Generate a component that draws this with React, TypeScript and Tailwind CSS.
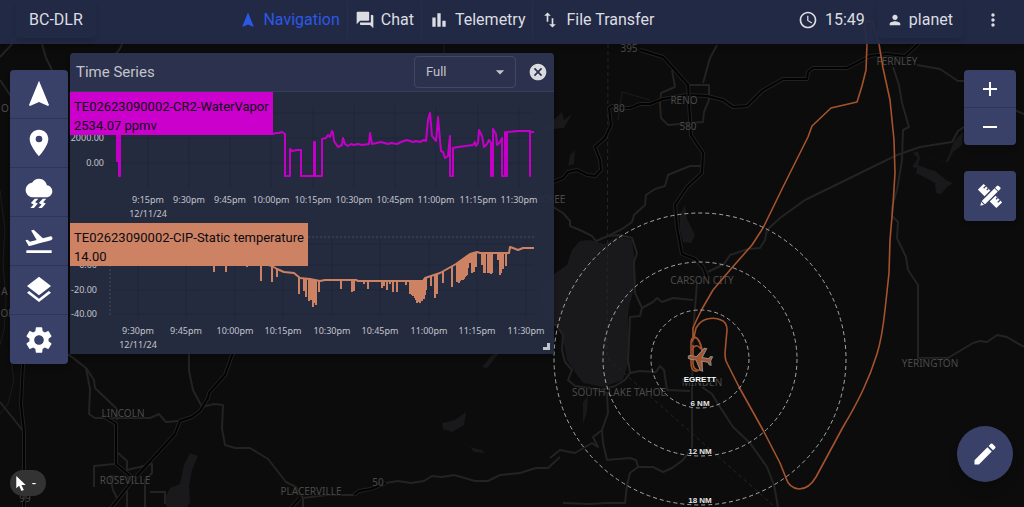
import type { FC, ReactNode } from 'react'
import type { IconType } from 'react-icons'
import {
    MdAccessTime,
    MdAdd,
    MdArrowDropDown,
    MdCancel,
    MdEdit,
    MdFlightTakeoff,
    MdForum,
    MdImportExport,
    MdLayers,
    MdMoreVert,
    MdNavigation,
    MdPerson,
    MdPlace,
    MdRemove,
    MdSettings,
    MdThunderstorm,
} from 'react-icons/md'
import { clsx } from 'clsx'

type Point = [number, number]

/* ---------- Map ---------- */

const roads = [
    'M717 45L710 58L703 83',
    'M672 70L675 87L661 93L660 104L661 118L668 125L703 122L704 112L709 100V85H690',
    'M697 283L693 333L692 390V447L683 460L672 468L663 472L653 467L638 467L636 460L630 458L607 460L603 443L602 430L608 413L607 393L590 388L575 386L568 380L572 370L565 362L562 350L563 335L556 325L550 322',
    'M638 467L630 473L627 485L625 503L606 503L590 504L563 503',
    'M550 458L560 450L575 453L592 443L598 447L593 437L602 430',
    'M550 205L563 213L570 221L570 226L582 231L592 236L596 241L608 236L622 229L632 222L634 215L645 205L646 195L655 189L665 186L668 175L675 172L690 166L703 166',
    'M608 236L620 235L632 238L637 253L634 262L635 293L642 308L653 302L657 298L662 302L673 298L693 300',
    'M642 308L640 316L630 317L629 340L628 360L630 373L640 371L656 372L660 366L664 370L667 390L690 391',
    'M630 373L625 380L615 386L600 390',
    'M702 387L712 394L720 407L733 427L750 443L767 467L774 485L778 507',
    'M708 272L724 264L730 255L748 249L760 248L765 240L767 230L780 218L805 200L897 155L920 147L952 142L958 131L964 127',
    'M893 67L899 85L902 103L909 127L903 130L902 160L897 190L892 207V216L898 222L897 238L906 257L908 270L918 285V358L948 358L973 343L980 341L987 342L997 335L1007 337L1024 347',
    'M917 65L940 69L958 81H964L1000 104L1024 114',
    'M68 354L86 368L90 389L89 414L95 418H150L159 414L166 422L179 421',
    'M86 368L94 380L95 388L117 409V420',
    'M189 350V371L193 390L202 407L214 404L223 405L222 429L225 445L235 448L250 448L268 459L286 482L296 487L303 498L327 495L354 495',
    'M386 483L398 481L411 483L424 481L432 476L442 477L454 475L475 481L488 481L500 475L520 473L536 468H548L560 457',
    'M0 402L24 432V444',
    'M94 487V466L114 464',
    'M118 453L127 461L127 470L152 464V473L145 480V507',
    'M127 486V507',
    'M134 479L110 476L113 490L118 500',
    'M150 492H165V504',
    'M303 498V507',
    'M0 57L14 42L20 30',
    'M0 80L12 98',
    'M42 44L46 58L52 70',
    'M110 58Q120 52 122 44',
]

// tracks and creeks that barely show against the ground
const minorRoads = [
    'M280 92L292 86L310 86L322 80L340 78L366 84L376 80L378 66L388 58L402 56L412 62L430 64L444 58L444 44',
    'M444 58L462 60L470 70L472 78L486 88L510 120L520 150L530 170L540 190L534 230L545 280L560 300',
    'M189 350L196 300L204 280L210 255L194 225L188 200L198 180L190 150L196 120',
    'M70 246L110 252L125 259L160 257L190 259L204 255',
    'M0 190L5 230L3 262L6 300L4 330L0 345',
    'M10 354L14 380L8 404L0 414',
    'M618 120L622 92L650 100',
]

const highways = [
    'M104 517L134 479L175 434L180 421L192 417L200 411L208 398L209 393L225 375L234 350L247 310L257 290L283 277L310 258L337 223L370 205L430 200L500 204L540 190L553 182L563 178L568 172L577 170L587 175L595 176L601 170L600 160L595 147L605 138L611 125L609 108L612 106L620 108L630 108L640 104L650 104L663 99L687 95L707 96L723 100L733 107L747 106L762 91L783 79L807 79L808 72L813 68L847 68L857 63L870 56L887 54L905 56L917 45L930 32',
    'M640 50L663 57L673 68L688 85L690 120L691 135L703 153L702 173L687 187L675 205L677 227L682 254L695 259L703 267L707 277',
    'M102 415L116 424V464L134 479',
    'M23 364L21 404L24 432V520',
    'M265 517L290 509L300 498',
    'M354 495L359 491L371 489L386 483',
]

const lakes = [
    'M580 241L590 240L605 244L618 236L632 240L634 255L636 283L630 303L628 315L629 360L623 380L603 387L583 383L577 375L567 360L562 333L555 323L545 320L540 290L550 277L567 265L572 250Z',
    'M680 214L685 205L687 219L695 235L691 243L683 242L680 230Z',
    'M913 153L918 151L920 158L946 161L950 152L954 141L963 132L962 145L953 152L948 162L932 159L920 158L918 165L928 169L935 171L946 180L953 183L947 187L941 194L936 193L935 183L926 178L916 173L917 168L912 167L918 158Z',
    'M164 500L170 488L180 484L184 465L190 453L198 456L192 470L189 486L190 502L183 515H170Z',
    'M583 402L588 396L587 412L583 424Z',
    'M482 367L492 355L500 352L487 368Z',
    'M442 423L455 420L466 412L464 425L452 432L443 429Z',
    'M470 447L482 450L485 453L474 452Z',
    'M542 130L556 118L562 112L564 120L572 114L564 128Z',
    'M570 155L575 150L574 164L568 166Z',
]

const places: { name: string; x: number; y: number }[] = [
    { name: '395', x: 629, y: 52 },
    { name: '80', x: 619, y: 112 },
    { name: 'RENO', x: 684, y: 104 },
    { name: '580', x: 688, y: 130 },
    { name: 'FERNLEY', x: 897, y: 65 },
    { name: 'TRUCKEE', x: 544, y: 203 },
    { name: 'CARSON CITY', x: 702, y: 284 },
    { name: 'MINDEN', x: 702, y: 386 },
    { name: 'SOUTH LAKE TAHOE', x: 619, y: 396 },
    { name: 'YERINGTON', x: 930, y: 367 },
    { name: 'LINCOLN', x: 123, y: 417 },
    { name: 'ROSEVILLE', x: 125, y: 484 },
    { name: 'PLACERVILLE', x: 311, y: 495 },
    { name: '50', x: 378, y: 486 },
    { name: '99', x: 25, y: 502 },
    { name: 'O', x: 5, y: 112 },
    { name: 'A C', x: 9, y: 295 },
    { name: 'OL', x: 7, y: 317 },
]

const rangeRings = [
    { radius: 49, label: '6 NM' },
    { radius: 97, label: '12 NM' },
    { radius: 146, label: '18 NM' },
]

const flightTrack =
    'M693 337L693 328L697 319L702 309L713 290L730 270L752 245L763 228L783 187L808 137L812 126L831 108L857 102L862 86L866 70L867 44L865 27Q865 21 869 21Q873 21 874 27L879 44L883 68L890 100L894 140L895 173L893 205L890 240L889 273L885 310Q882 338 877 354Q871 373 863 390Q855 407 843 427L816 477Q809 489 799 489Q789 488 786 478L780 463L763 430L739 387L726 361Q725 358 725 353L727 330Q727 322 721 320Q715 317 707 319Q700 321 696 328L694 337'

const MapCanvas: FC = () => (
    <svg
        viewBox="0 0 1024 507"
        preserveAspectRatio="xMidYMid slice"
        aria-label="Map"
        className="absolute inset-0 h-full w-full">
        <g fill="#19191b">
            {lakes.map(d => (
                <path key={d} d={d} />
            ))}
        </g>
        <path d="M608 44L607 358L775 507" fill="none" stroke="#252525" strokeDasharray="4 3" />
        <g fill="none" stroke="#1b1b1b" strokeLinejoin="round">
            {minorRoads.map(d => (
                <path key={d} d={d} />
            ))}
        </g>
        <g fill="none" stroke="#232323" strokeWidth="2" strokeLinejoin="round">
            {roads.map(d => (
                <path key={d} d={d} />
            ))}
        </g>
        <g fill="none" strokeLinejoin="round">
            {highways.map(d => (
                <g key={d}>
                    <path d={d} stroke="#212121" strokeWidth="4" />
                    <path d={d} stroke="#020202" strokeWidth="2" />
                </g>
            ))}
        </g>
        <g
            fill="#4a4a4a"
            stroke="#0c0c0c"
            strokeWidth="1"
            paintOrder="stroke"
            textAnchor="middle"
            className="font-['Noto_Sans',sans-serif] text-[10px]">
            {places.map(place => (
                <text key={place.name} x={place.x} y={place.y}>
                    {place.name}
                </text>
            ))}
        </g>

        {/* Flight path and holding pattern */}
        <g fill="none" stroke="#a5532d" strokeWidth="1.6" strokeLinejoin="round">
            <path d={flightTrack} />
            <path d="M691 343Q691 337 695 337Q699 338 702 349V366Q699 372 695 371Q691 370 691 363Z" />
            <path d="M692 342Q695 333 700 343L702 350M692 350Q696 342 701 349M693 345V364Q694 370 698 370" />
        </g>

        <g fill="none" stroke="#a9a9a9" strokeDasharray="4 3">
            {rangeRings.map(ring => (
                <circle key={ring.label} cx="700" cy="359" r={ring.radius} />
            ))}
        </g>
        <g
            fill="#e4e4e4"
            stroke="#0c0c0c"
            strokeWidth="2"
            paintOrder="stroke"
            textAnchor="middle"
            className="font-['Liberation_Sans',sans-serif] text-[8px] font-bold">
            {rangeRings.map(ring => (
                <text key={ring.label} x="700" y={357 + ring.radius}>
                    {ring.label}
                </text>
            ))}
        </g>
        <path
            d="M21 16v-2l-8-5V3.5c0-.83-.67-1.5-1.5-1.5S10 2.67 10 3.5V9l-8 5v2l8-2.5V19l-2 1.5V22l3.5-1 3.5 1v-1.5L13 19v-5.5l8 2.5z"
            transform="translate(700 359) rotate(-80) scale(1.2) translate(-11.5 -12)"
            fill="#a5532d"
            stroke="#8f8f8f"
            strokeWidth=".8"
        />
        <text
            x="700"
            y="382"
            fill="#fff"
            stroke="#0c0c0c"
            strokeWidth="2"
            paintOrder="stroke"
            textAnchor="middle"
            className="font-['Liberation_Sans',sans-serif] text-[8px] font-bold">
            EGRETT
        </text>
    </svg>
)

/* ---------- Top bar ---------- */

const PollIcon: FC<{ className?: string }> = ({ className }) => (
    <svg viewBox="0 0 24 24" fill="currentColor" className={className} aria-hidden="true">
        <path d="M4 9h4v11H4zM10 4h4v16h-4zM16 13h4v7h-4z" />
    </svg>
)

const tabs: { label: string; Icon: IconType | FC<{ className?: string }> }[] = [
    { label: 'Navigation', Icon: MdNavigation },
    { label: 'Chat', Icon: MdForum },
    { label: 'Telemetry', Icon: PollIcon },
    { label: 'File Transfer', Icon: MdImportExport },
]

const TopBar: FC = () => (
    <header className="flex h-11 shrink-0 items-center justify-between bg-[#242b48]/95 pr-[21px] pl-4 text-base text-[#dcdde2] shadow-md">
        <button className="-mt-1 h-9 rounded px-[13px] shadow-md">BC-DLR</button>
        <nav className="-mt-1 flex items-center">
            {tabs.map(({ label, Icon }, index) => (
                <a
                    key={label}
                    href="#"
                    aria-current={index === 0 ? 'page' : undefined}
                    className={clsx(
                        'flex h-9 items-center gap-1.5 px-[7px]',
                        index === 0 ? 'text-[#2c58e6]' : 'border-l border-[#272e4b]'
                    )}>
                    <Icon className={index === 0 ? 'size-[18px]' : 'size-5'} />
                    {label}
                </a>
            ))}
        </nav>
        <div className="-mt-1 flex items-center">
            <MdAccessTime className="size-5" />
            <time className="ml-[7px]">15:49</time>
            <button className="ml-3 flex h-9 items-center gap-1.5 rounded px-2.5 shadow-md">
                <MdPerson className="size-4" />
                planet
            </button>
            <button aria-label="More options" className="ml-5">
                <MdMoreVert className="size-5" />
            </button>
        </div>
    </header>
)

/* ---------- Tool buttons ---------- */

const tools: { label: string; Icon: IconType }[] = [
    { label: 'Center on aircraft', Icon: MdNavigation },
    { label: 'Markers', Icon: MdPlace },
    { label: 'Weather', Icon: MdThunderstorm },
    { label: 'Flights', Icon: MdFlightTakeoff },
    { label: 'Layers', Icon: MdLayers },
    { label: 'Settings', Icon: MdSettings },
]

const PencilRulerIcon: FC<{ className?: string }> = ({ className }) => (
    <svg viewBox="-12 -12 24 24" className={className} aria-hidden="true">
        <g transform="rotate(45)">
            <path d="M-13 -4H13V4H-13Z" fill="currentColor" />
            <path d="M-10 -4V-1M-6.500 -4V-2M6.500 -4V-2M10 -4V-1" stroke="#394169" strokeWidth="1.3" />
        </g>
        <g transform="rotate(-45)">
            <path d="M-15 0L-10 -3H12Q14 -3 14 -1V1Q14 3 12 3H-10Z" fill="currentColor" stroke="#394169" strokeWidth="1.4" />
            <path d="M9 -3V3M-10 -3V3" stroke="#394169" strokeWidth="1" />
        </g>
    </svg>
)

const ButtonStack: FC<{ children: ReactNode }> = ({ children }) => (
    <div className="flex flex-col divide-y divide-[#2d3559] overflow-hidden rounded bg-[#394169] text-white shadow-md">{children}</div>
)

const Sidebar: FC = () => (
    <ButtonStack>
        {tools.map(({ label, Icon }) => (
            <button key={label} aria-label={label} className="flex h-[49px] w-[58px] items-center justify-center">
                <Icon className="size-8" />
            </button>
        ))}
    </ButtonStack>
)

/* ---------- Time series ---------- */

const vaporLine: Point[] = [
    [47, 70], [47, 38], [49, 38], [49, 84], [50, 84], [50, 40], [90, 41], [150, 40], [188, 42], [203, 42], [206, 41], [209, 41],
    [212, 40], [215, 42], [215, 84], [220, 84], [220, 57], [222, 59], [227, 58], [231, 58], [231, 84], [244, 84], [244, 50], [245, 50],
    [245, 84], [252, 84], [252, 47], [256, 46], [258, 43], [260, 45], [262, 39], [263, 41], [264, 49], [268, 55], [272, 53], [273, 46],
    [275, 52], [278, 54], [281, 52], [284, 53], [288, 52], [292, 53], [299, 52], [300, 41], [302, 52], [311, 50], [318, 52], [321, 51],
    [327, 52], [331, 50], [337, 48], [343, 50], [346, 49], [350, 50], [354, 48], [356, 49], [358, 28], [360, 21], [362, 44], [366, 49],
    [367, 38], [368, 25], [370, 48], [371, 59], [373, 60], [375, 66], [378, 64], [379, 53], [380, 44], [380, 84], [383, 84], [383, 56],
    [388, 55], [403, 53], [405, 50], [406, 54], [408, 51], [409, 38], [412, 44], [414, 55], [417, 52], [419, 48], [421, 51], [421, 84],
    [423, 84], [423, 37], [426, 42], [427, 53], [430, 50], [432, 46], [432, 84], [435, 84], [435, 40], [436, 84], [437, 84], [437, 40],
    [448, 39], [460, 39], [460, 84], [460, 40], [464, 40],
]

const temperatureLine: Point[] = [
    [47, 34], [144, 37], [190, 40], [202, 43], [207, 46], [214, 49], [224, 50], [230, 55], [240, 56], [250, 58], [255, 57], [286, 57],
    [288, 58], [353, 58], [355, 55], [370, 50], [386, 41], [400, 31], [407, 29], [410, 30], [439, 30], [440, 24], [443, 25], [448, 27],
    [453, 25], [464, 25],
]

// sensor drop-outs: x position and the depth each one reaches
const temperatureDips: Point[] = [
    [144, 49], [156, 49], [177, 44], [191, 58], [202, 59], [207, 54], [229, 71], [234, 68], [236, 74], [239, 78], [241, 77], [243, 84],
    [244, 80], [246, 82], [249, 69], [271, 66], [282, 69], [284, 68], [294, 61], [298, 66], [312, 65], [314, 63], [317, 67], [320, 61],
    [323, 69], [327, 69], [336, 62], [340, 71], [341, 70], [342, 72], [343, 73], [344, 72], [345, 75], [346, 77], [347, 80], [348, 79],
    [349, 78], [350, 80], [351, 76], [352, 78], [353, 74], [354, 76], [355, 72], [356, 67], [361, 63], [365, 75], [367, 71], [373, 60],
    [382, 64], [387, 59], [388, 59], [389, 60], [390, 58], [391, 57], [392, 56], [393, 57], [394, 56], [395, 54], [396, 53], [397, 52],
    [398, 45], [400, 40], [402, 50], [404, 49], [406, 44], [412, 42], [414, 50], [415, 50], [418, 50], [419, 49], [420, 50], [421, 51],
    [422, 50], [428, 37], [430, 52], [431, 50], [433, 46], [436, 43],
]

const valueAt = (line: Point[], x: number) => {
    const next = line.findIndex(([px]) => px >= x)
    if (next <= 0) return line[0][1]
    const [x0, y0] = line[next - 1]
    const [x1, y1] = line[next]
    return y0 + ((y1 - y0) * (x - x0)) / (x1 - x0)
}

interface SeriesChartProps {
    title: string
    value: string
    labelClass: string
    color: string
    line: Point[]
    dips?: Point[]
    xTicks: { x: number; label: string }[]
    yTicks: { y: number; label: string }[]
    yLabelX: number
    children?: ReactNode
}

const SeriesChart: FC<SeriesChartProps> = ({ title, value, labelClass, color, line, dips = [], xTicks, yTicks, yLabelX, children }) => (
    <section className="relative">
        <svg viewBox="0 0 484 131" className="block w-full" role="img" aria-label={title}>
            <g stroke="#20263a">
                {xTicks.map(tick => (
                    <path key={tick.label} d={`M${tick.x} 14V96`} />
                ))}
                {yTicks.map(tick => (
                    <path key={tick.label} d={`M40 ${tick.y}H464`} />
                ))}
                <path d="M40 21H464" />
            </g>
            {children}
            <g fill="#c3c5cc" className="font-['Noto_Sans',sans-serif] text-[9px]">
                {yTicks.map(tick => (
                    <text key={tick.label} x={yLabelX} y={tick.y + 3} textAnchor="end">
                        {tick.label}
                    </text>
                ))}
                {xTicks.map(tick => (
                    <text key={tick.label} x={tick.x} y="111" textAnchor="middle">
                        {tick.label}
                    </text>
                ))}
                <text x={xTicks[0].x} y="125" textAnchor="middle">
                    12/11/24
                </text>
            </g>
            <g fill="none" stroke={color} strokeWidth="2">
                <path d={`M${line.map(point => point.join(' ')).join('L')}`} strokeLinejoin="round" />
                {dips.map(([x, y]) => (
                    <path key={x} d={`M${x} ${valueAt(line, x)}V${y}`} />
                ))}
            </g>
        </svg>
        {/* Current value */}
        <div className={clsx('absolute top-0 left-0 px-1 pt-[5px] text-[13px] leading-[19px] text-[#0b0b10]', labelClass)}>
            <p>{title}</p>
            <p>{value}</p>
        </div>
    </section>
)

const vaporTicks = [
    { x: 78, label: '9:15pm' },
    { x: 119, label: '9:30pm' },
    { x: 160, label: '9:45pm' },
    { x: 201, label: '10:00pm' },
    { x: 243, label: '10:15pm' },
    { x: 284, label: '10:30pm' },
    { x: 325, label: '10:45pm' },
    { x: 366, label: '11:00pm' },
    { x: 408, label: '11:15pm' },
    { x: 449, label: '11:30pm' },
]

const temperatureTicks = [
    { x: 68, label: '9:30pm' },
    { x: 116, label: '9:45pm' },
    { x: 165, label: '10:00pm' },
    { x: 213, label: '10:15pm' },
    { x: 262, label: '10:30pm' },
    { x: 310, label: '10:45pm' },
    { x: 359, label: '11:00pm' },
    { x: 407, label: '11:15pm' },
    { x: 456, label: '11:30pm' },
]

const TimeSeriesPanel: FC = () => (
    <section className="relative w-[484px] overflow-hidden rounded-t bg-[#272d42]/95 shadow-md">
        <div className="flex h-[39px] items-center border-b border-[#373d56] bg-[#2e3350]/90 pr-1.5 pl-1.5 text-[#c3c4cb]">
            <h2 className="text-[15px]">Time Series</h2>
            <div className="relative ml-auto">
                <select
                    aria-label="Time range"
                    defaultValue="Full"
                    className="h-8 w-[102px] appearance-none rounded border border-[#434861] bg-transparent pl-[11px] text-[13px]">
                    <option>Full</option>
                </select>
                <MdArrowDropDown className="pointer-events-none absolute top-1.5 right-1.5 size-5" />
            </div>
            <button aria-label="Close" className="ml-3 text-[#dadbdf]">
                <MdCancel className="size-5" />
            </button>
        </div>
        <SeriesChart
            title="TE02623090002-CR2-WaterVapor"
            value="2534.07 ppmv"
            labelClass="bg-[#cc00cc]"
            color="#c400c8"
            line={vaporLine}
            xTicks={vaporTicks}
            yTicks={[
                { y: 46, label: '2000.00' },
                { y: 71, label: '0.00' },
            ]}
            yLabelX={34}
        />
        <SeriesChart
            title="TE02623090002-CIP-Static temperature"
            value="14.00"
            labelClass="bg-[#cd8264]"
            color="#cd8264"
            line={temperatureLine}
            dips={temperatureDips}
            xTicks={temperatureTicks}
            yTicks={[
                { y: 42, label: '0.00' },
                { y: 67, label: '-20.00' },
                { y: 91, label: '-40.00' },
            ]}
            yLabelX={27}>
            <path d="M40 92V14H464" fill="none" stroke="#40505f" strokeDasharray="2 2" />
        </SeriesChart>
        {/* Resize handle */}
        <svg viewBox="0 0 7 7" className="absolute right-1 bottom-1 size-[7px] cursor-se-resize">
            <path d="M5.500 0V5.500H0" fill="none" stroke="#c3c5cc" strokeWidth="3" />
        </svg>
    </section>
)

const App: FC = () => {
    return (
        <div className="relative flex h-screen flex-col overflow-hidden bg-[#0c0c0c] font-['Roboto',sans-serif]">
            <MapCanvas />
            <div className="relative flex flex-1 flex-col">
                <TopBar />
                <main className="flex flex-1 items-stretch">
                    <div className="flex flex-col items-start justify-between pt-[26px] pb-[11px] pl-2.5">
                        <Sidebar />
                        <div className="flex h-[26px] w-9 items-center gap-1 rounded-full bg-[#333333] pl-1 text-sm text-white">
                            <svg viewBox="0 0 14 18" className="h-[17px] w-[14px]" aria-hidden="true">
                                <path d="M2 1V14L5 11.500L7.500 17L10 16L7.500 10.500H12Z" fill="#fff" />
                            </svg>
                            -
                        </div>
                    </div>
                    <div className="pt-[9px] pl-0.5">
                        <TimeSeriesPanel />
                    </div>
                    <div className="ml-auto flex flex-col items-end pt-[26px] pr-2 pb-[25px]">
                        <ButtonStack>
                            <button aria-label="Zoom in" className="flex h-[38px] w-[52px] items-center justify-center">
                                <MdAdd className="size-6" />
                            </button>
                            <button aria-label="Zoom out" className="flex h-[37px] w-[52px] items-center justify-center">
                                <MdRemove className="size-6" />
                            </button>
                        </ButtonStack>
                        <button
                            aria-label="Drawing tools"
                            className="mt-[26px] flex h-[50px] w-[52px] items-center justify-center rounded bg-[#394169] text-white shadow-md">
                            <PencilRulerIcon className="size-6" />
                        </button>
                        <button
                            aria-label="Edit"
                            className="mt-auto mr-[3px] flex size-14 items-center justify-center rounded-full bg-[#394169] text-white shadow-lg">
                            <MdEdit className="size-7" />
                        </button>
                    </div>
                </main>
            </div>
        </div>
    )
}

export default App
